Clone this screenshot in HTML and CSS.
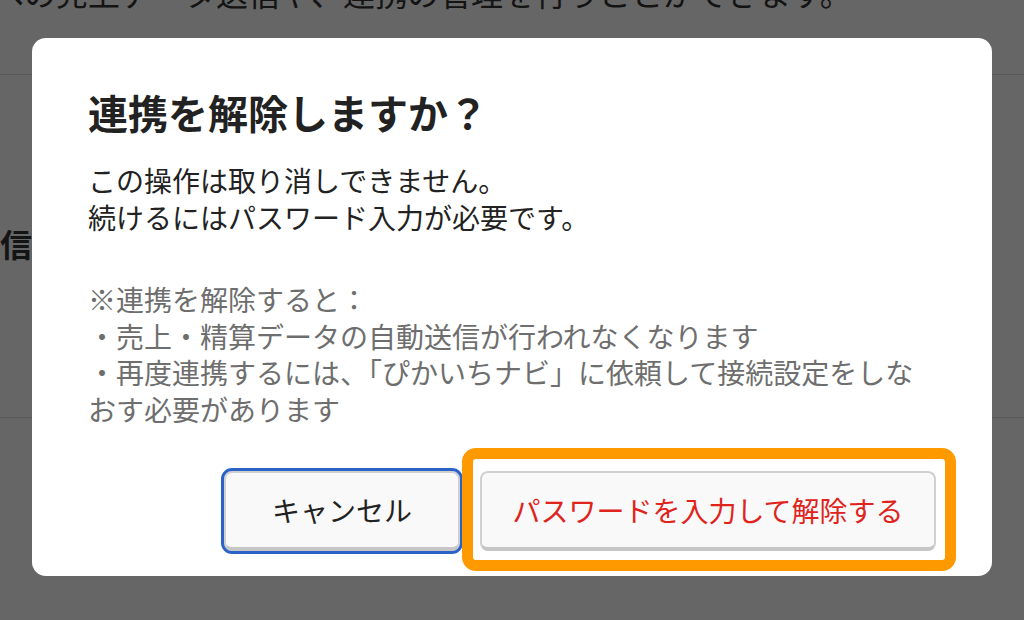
FILE: index.html
```html
<!DOCTYPE html>
<html lang="ja">
<head>
  <meta charset="UTF-8">
  <meta name="viewport" content="width=device-width, initial-scale=1.0">
  <title>連携設定</title>
  <link rel="stylesheet" href="styles.css">
</head>
<body>

<div class="page">
  <p class="page-lead">への売上データ送信や、連携の管理を行うことができます。</p>
  <div class="settings">
    <div class="settings-row">
      <div class="row-label"><span>データ送信</span></div>
      <div class="row-value">有効</div>
    </div>
  </div>
</div>

<div class="backdrop">
  <div class="dialog" role="dialog" aria-labelledby="dialogTitle">
    <h2 id="dialogTitle" class="dialog-title">連携を解除しますか？</h2>
    <p class="dialog-text">この操作は取り消しできません。<br>続けるにはパスワード入力が必要です。</p>
    <p class="dialog-note">※連携を解除すると：<br>・売上・精算データの自動送信が行われなくなります<br>・再度連携するには、「ぴかいちナビ」に依頼して接続設定をしなおす必要があります</p>
    <div class="dialog-actions">
      <button class="btn btn-cancel" type="button">キャンセル</button>
      <span class="highlight">
        <button class="btn btn-danger" type="button">パスワードを入力して解除する</button>
      </span>
    </div>
  </div>
</div>

</body>
</html>
```

FILE: styles.css
```css
body {
  margin: 0;
  font-family: "Noto Sans CJK JP", "Noto Sans", sans-serif;
  background-color: #ffffff;
  color: #333;
  overflow: hidden;
  height: 620px;
}

.page-lead {
  margin: -30px 0 0 -8px;
  font-size: 32px;
  line-height: 44px;
  white-space: nowrap;
}

.settings {
  margin-top: 60px;
  border-top: 1px solid #e0e0e0;
  border-bottom: 1px solid #e0e0e0;
}

.settings-row {
  display: flex;
  align-items: center;
  height: 342px;
}

.row-label {
  width: 32px;
  display: flex;
  justify-content: flex-end;
  padding-bottom: 6px;
  font-size: 32px;
  font-weight: bold;
  white-space: nowrap;
}

.row-value {
  margin-left: 40px;
  font-size: 28px;
}

/* modal */
.backdrop {
  position: fixed;
  top: 0;
  left: 0;
  right: 0;
  bottom: 0;
  background-color: rgba(0, 0, 0, 0.6);
  display: flex;
  justify-content: center;
  align-items: flex-start;
  padding-top: 38px;
}

.dialog {
  width: 960px;
  box-sizing: border-box;
  background-color: #ffffff;
  border-radius: 14px;
  padding: 46px 56px 25px 56px;
}

.dialog-title {
  margin: 0 0 22px 0;
  font-size: 40px;
  line-height: 56px;
  font-weight: bold;
  color: #222;
}

.dialog-text,
.dialog-note {
  margin: 0;
  font-size: 28px;
  line-height: 36.5px;
}

.dialog-text {
  color: #222;
}

.dialog-note {
  margin-top: 46px;
  color: #6e6e6e;
}

.dialog-actions {
  display: flex;
  justify-content: flex-end;
  align-items: center;
  gap: 20px;
  margin-top: 44px;
}

.btn {
  height: 80px;
  box-sizing: border-box;
  font-family: inherit;
  font-size: 28px;
  background-color: #f9f9f9;
  border: 2px solid #d0d0d0;
  border-bottom: 4px solid #c6c6c6;
  border-radius: 8px;
  cursor: pointer;
}

.btn-cancel {
  width: 236px;
  color: #222;
  outline: 3px solid #2b62c8;
  outline-offset: 0;
}

.btn-danger {
  width: 456px;
  color: #e0231b;
  display: block;
}

.highlight {
  position: relative;
  display: block;
}

.highlight::after {
  content: "";
  position: absolute;
  top: -23px;
  left: -18px;
  right: -20px;
  bottom: -20px;
  border: 11px solid #ff9900;
  border-radius: 14px;
  pointer-events: none;
}
```
